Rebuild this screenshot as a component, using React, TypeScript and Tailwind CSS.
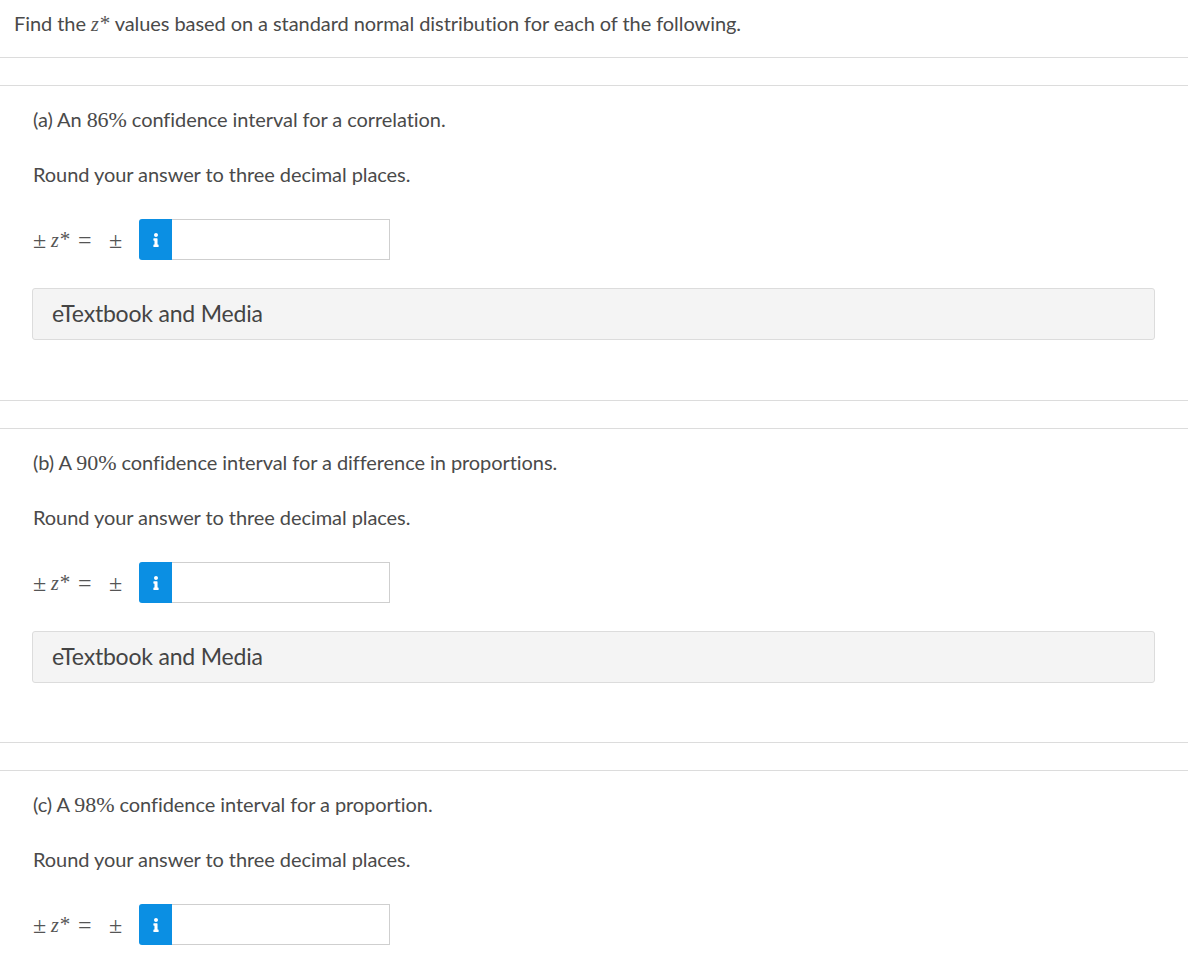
import { FaInfo } from 'react-icons/fa'

const serif = "font-['Liberation_Serif',serif]"

function ZStar() {
  return (
    <span className={`${serif} italic text-[20px] text-[#555]`}>
      z<sup className="relative top-[-1px] ml-px align-baseline text-[21px] leading-none not-italic">*</sup>
    </span>
  )
}

function Part({ label, pct, rest, last, gap = 'mb-[60px]' }: { label: string; pct: string; rest: string; last?: boolean; gap?: string }) {
  return (
    <section className="border-t border-[#dcdcdc] pl-[32px] pr-[33px] pt-[19px]">
      <p className="h-[28px] pl-px text-[20px] leading-[28px] tracking-[-0.07px]">
        {label} <span className={`${serif} text-[22px]`}>{pct}</span> {rest}
      </p>
      <p className="mt-[27px] h-[28px] pl-px text-[20px] leading-[28px] tracking-[-0.07px]">Round your answer to three decimal places.</p>
      <div className="mt-[17px] flex h-[41px] items-center pt-[14px] box-content">
        <span className={`${serif} flex w-[107px] items-center pl-px text-[#555]`}>
          <span className="w-[18px] text-[24px] leading-none">±</span>
          <span className="w-[27px]">
            <ZStar />
          </span>
          <span className="w-[31px] text-[24px] leading-none">=</span>
          <span className="text-[24px] leading-none">±</span>
        </span>
        <span className="flex h-[41px] w-[33px] items-center justify-center rounded-l-[3px] bg-[#0b8fe3]">
          <FaInfo className="h-[14px] w-[14px] text-white" aria-hidden="true" />
        </span>
        <input type="text" aria-label="z star" className="h-[41px] w-[218px] border border-l-0 border-[#cfcfcf] bg-white" />
      </div>
      {!last && (
        <div className={`mt-[28px] ${gap} flex h-[52px] items-center rounded-[3px] border border-[#dcdcdc] bg-[#f4f4f4] pb-[2px] pl-[19px] text-[23px] tracking-[-0.2px] text-[#444]`}>
          eTextbook and Media
        </div>
      )}
    </section>
  )
}

export default function App() {
  return (
    <div className="h-[962px] w-[1188px] overflow-hidden bg-white font-['Lato',sans-serif] text-[#4a4a4a]">
      <header className="flex h-[58px] items-start border-b border-[#dcdcdc] pl-[14px] pt-[9px]">
        <p className="text-[20px] leading-[28px] tracking-[-0.07px]">
          Find the <ZStar /> values based on a standard normal distribution for each of the following.
        </p>
      </header>
      <div className="mt-[27px] flex flex-col">
        <Part label="(a) An" pct="86%" rest="confidence interval for a correlation." />
        <div className="h-[28px] border-t border-[#dcdcdc]" />
        <Part label="(b) A" pct="90%" rest="confidence interval for a difference in proportions." gap="mb-[59px]" />
        <div className="h-[28px] border-t border-[#dcdcdc]" />
        <Part label="(c) A" pct="98%" rest="confidence interval for a proportion." last />
      </div>
    </div>
  )
}
